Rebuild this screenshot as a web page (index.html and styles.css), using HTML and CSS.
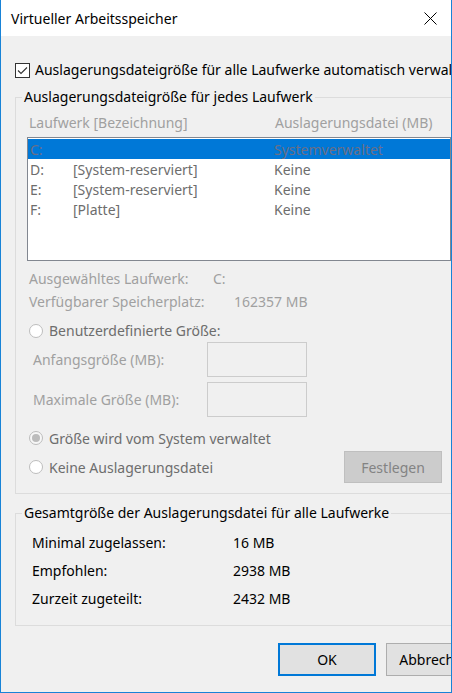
FILE: index.html
```html
<!DOCTYPE html>
<html lang="de">
<head>
<meta charset="utf-8">
<title>Virtueller Arbeitsspeicher</title>
<link rel="stylesheet" href="styles.css">
</head>
<body>
<div class="window">
  <div class="titlebar">
    <span class="title">Virtueller Arbeitsspeicher</span>
    <svg class="close" width="13" height="13" viewBox="0 0 13 13"><path d="M0.5 0.5 L12.5 12.5 M12.5 0.5 L0.5 12.5" stroke="#000" stroke-width="1" fill="none"/></svg>
  </div>
  <div class="content">
    <div class="check-row">
      <svg class="checkbox" width="15" height="15" viewBox="0 0 15 15"><rect x="0.5" y="0.5" width="14" height="14" fill="#fff" stroke="#333"/><path d="M3 7.5 L6 10.5 L12 4.5" stroke="#333" stroke-width="1.1" fill="none"/></svg>
      <span>Auslagerungsdateigröße für alle Laufwerke automatisch verwalten</span>
    </div>

    <fieldset class="group">
      <legend>Auslagerungsdateigröße für jedes Laufwerk</legend>
      <div class="group-body drives">
        <div class="list-head"><span class="head-a">Laufwerk [Bezeichnung]</span><span>Auslagerungsdatei (MB)</span></div>
        <div class="listbox">
          <div class="lrow selected"><span class="c-drive">C:</span><span class="c-label"></span><span>Systemverwaltet</span></div>
          <div class="lrow"><span class="c-drive">D:</span><span class="c-label">[System-reserviert]</span><span>Keine</span></div>
          <div class="lrow"><span class="c-drive">E:</span><span class="c-label">[System-reserviert]</span><span>Keine</span></div>
          <div class="lrow"><span class="c-drive">F:</span><span class="c-label">[Platte]</span><span>Keine</span></div>
        </div>
        <div class="info-row first"><span class="info-a">Ausgewähltes Laufwerk:</span><span>C:</span></div>
        <div class="info-row"><span class="info-b">Verfügbarer Speicherplatz:</span><span>162357 MB</span></div>

        <div class="radio-row custom">
          <svg class="radio" width="14" height="14" viewBox="0 0 14 14"><circle cx="7" cy="7" r="6.5" fill="#fff" stroke="#bcbcbc"/></svg>
          <span>Benutzerdefinierte Größe:</span>
        </div>
        <div class="size-row first">
          <span class="size-label">Anfangsgröße (MB):</span>
          <span class="size-box"></span>
        </div>
        <div class="size-row">
          <span class="size-label">Maximale Größe (MB):</span>
          <span class="size-box"></span>
        </div>
        <div class="radio-row system">
          <svg class="radio" width="14" height="14" viewBox="0 0 14 14"><circle cx="7" cy="7" r="6.5" fill="#f7f7f7" stroke="#bcbcbc"/><circle cx="7" cy="7" r="4" fill="#bcbcbc"/></svg>
          <span>Größe wird vom System verwaltet</span>
        </div>
        <div class="radio-row last">
          <svg class="radio" width="14" height="14" viewBox="0 0 14 14"><circle cx="7" cy="7" r="6.5" fill="#fff" stroke="#bcbcbc"/></svg>
          <span>Keine Auslagerungsdatei</span>
          <button class="btn-set" type="button">Festlegen</button>
        </div>
      </div>
    </fieldset>

    <fieldset class="group total">
      <legend>Gesamtgröße der Auslagerungsdatei für alle Laufwerke</legend>
      <div class="group-body totals">
        <div class="total-row"><span class="total-label">Minimal zugelassen:</span><span>16 MB</span></div>
        <div class="total-row"><span class="total-label">Empfohlen:</span><span>2938 MB</span></div>
        <div class="total-row"><span class="total-label">Zurzeit zugeteilt:</span><span>2432 MB</span></div>
      </div>
    </fieldset>

    <div class="buttons">
      <button class="btn btn-ok" type="button">OK</button>
      <button class="btn btn-cancel" type="button">Abbrechen</button>
    </div>
  </div>
</div>
</body>
</html>
```

FILE: styles.css
```css
html, body {
  margin: 0;
  padding: 0;
  background: #f0f0f0;
}

body {
  font-family: "Noto Sans", "Open Sans", sans-serif;
  font-size: 14px;
  color: #000;
}

.window {
  width: 452px;
  height: 693px;
  box-sizing: border-box;
  border: 1px solid #1883d7;
  border-top: none;
  background: #f0f0f0;
  overflow: hidden;
  display: flex;
  flex-direction: column;
}

.titlebar {
  height: 36px;
  flex: 0 0 36px;
  background: #fff;
  display: flex;
  align-items: center;
  justify-content: space-between;
  padding: 1px 14px 0 10px;
  box-sizing: border-box;
}

.title {
  font-size: 14px;
  line-height: 20px;
  white-space: nowrap;
}

.close {
  display: block;
}

.content {
  padding-left: 14px;
  white-space: nowrap;
}

.check-row {
  display: flex;
  align-items: center;
  gap: 5px;
  margin-top: 24px;
  height: 20px;
  line-height: 20px;
}

.checkbox {
  display: block;
  flex: 0 0 auto;
}

.group {
  margin: 7px 0 0 0;
  padding: 0;
  border: 1px solid #dcdcdc;
  width: 470px;
  box-sizing: border-box;
  min-width: 0;
}

.group legend {
  margin-left: 6px;
  padding: 0 2px;
  line-height: 20px;
  height: 20px;
}

.group-body.drives {
  padding: 6px 0 10px 11px;
}

.list-head {
  display: flex;
  height: 20px;
  line-height: 20px;
  padding-left: 2px;
  color: #a0a0a0;
}

.head-a {
  width: 246px;
}

.listbox {
  margin-top: 4px;
  width: 424px;
  height: 124px;
  box-sizing: border-box;
  border: 1px solid #828790;
  background: #fff;
  padding-top: 1px;
}

.lrow {
  display: flex;
  height: 20px;
  line-height: 22px;
  padding-left: 2px;
  color: #6d6d6d;
}

.lrow.selected {
  background: #0078d7;
  color: #6b6f86;
}

.c-drive {
  width: 43px;
}

.c-label {
  width: 201px;
}

.info-row {
  display: flex;
  height: 23px;
  line-height: 23px;
  padding-left: 2px;
  color: #a0a0a0;
}

.info-row.first {
  margin-top: 6px;
}

.info-a {
  width: 184px;
}

.info-b {
  width: 205px;
}

.radio-row {
  display: flex;
  align-items: center;
  gap: 6px;
  padding-left: 2px;
  color: #6d6d6d;
}

.radio {
  display: block;
  flex: 0 0 auto;
}

.radio-row.custom {
  margin-top: 7px;
  height: 21px;
}

.radio-row.system {
  margin-top: 11px;
  height: 20px;
}

.radio-row.last {
  margin-top: 3px;
  height: 32px;
  width: 413px;
}

.size-row {
  display: flex;
  align-items: center;
  height: 35px;
  padding-left: 6px;
  color: #a0a0a0;
}

.size-row.first {
  margin-top: 1px;
}

.size-row + .size-row {
  margin-top: 5px;
}

.size-label {
  width: 174px;
}

.size-box {
  display: block;
  width: 100px;
  height: 35px;
  box-sizing: border-box;
  border: 1px solid #cccccc;
  background: #f0f0f0;
}

.btn-set {
  margin-left: auto;
  width: 98px;
  height: 32px;
  box-sizing: border-box;
  background: #cccccc;
  border: 1px solid #bfbfbf;
  color: #838383;
  font-family: inherit;
  font-size: 14px;
  padding: 0;
}

.group.total {
  margin-top: 9px;
}

.group-body.totals {
  padding: 6px 0 12px 16px;
}

.total-row {
  display: flex;
  height: 28px;
  line-height: 28px;
}

.total-label {
  width: 201px;
}

.buttons {
  display: flex;
  gap: 10px;
  margin-top: 17px;
  padding-left: 263px;
}

.btn {
  flex: 0 0 98px;
  width: 98px;
  height: 33px;
  box-sizing: border-box;
  background: #e1e1e1;
  font-family: inherit;
  font-size: 14px;
  color: #000;
  padding: 0;
  white-space: nowrap;
}

.btn-ok {
  border: 2px solid #0078d7;
}

.btn-cancel {
  border: 1px solid #adadad;
}
```
